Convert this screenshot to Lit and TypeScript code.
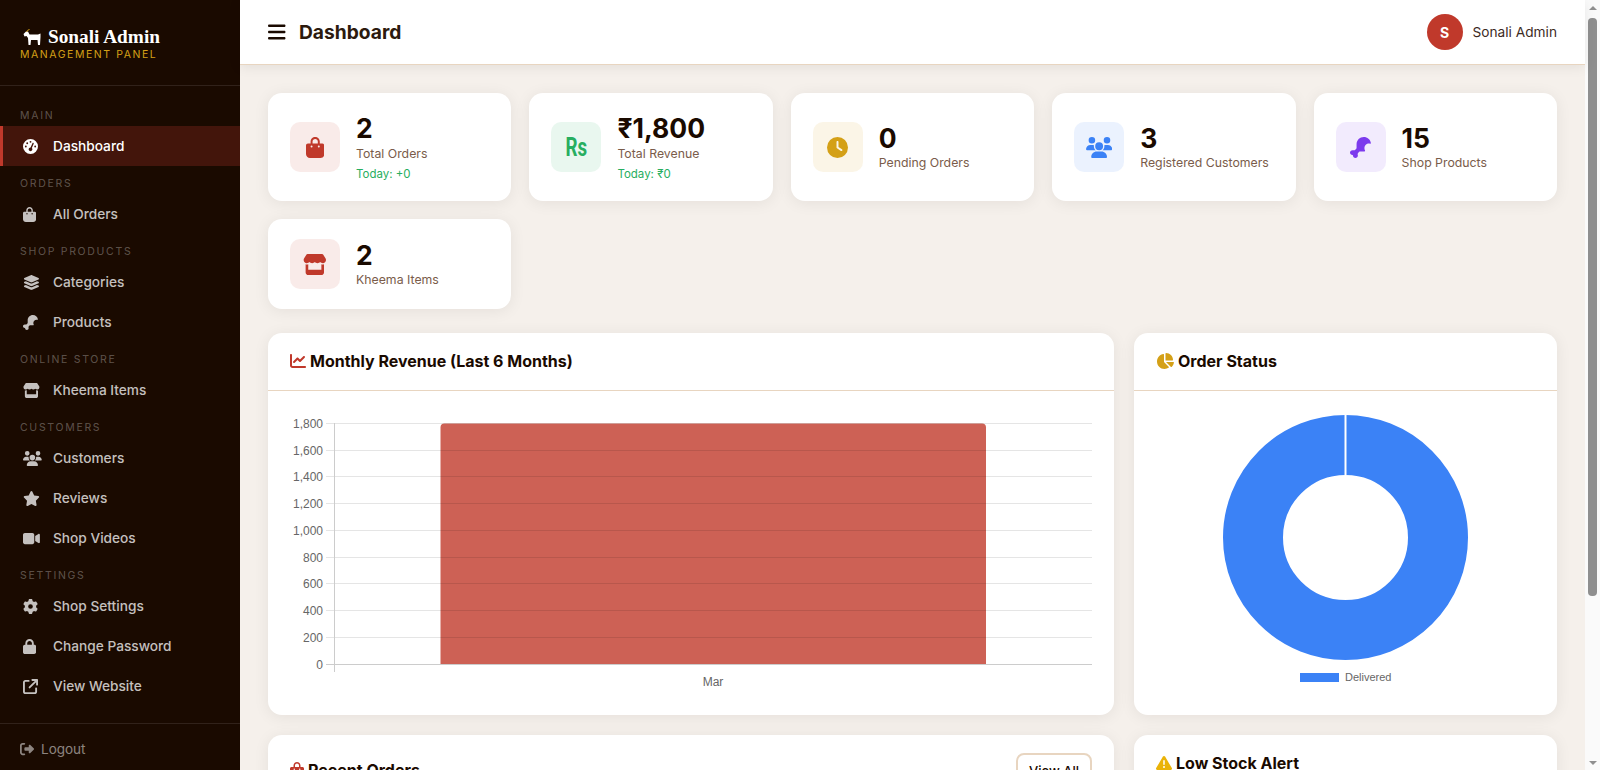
import {LitElement, html, css, svg} from 'lit';
import {customElement} from 'lit/decorators.js';

type Icon = {w: number; d: string};

const ICONS: Record<string, Icon> = {
    bag: {w: 448, d: 'M160 112c0-35.3 28.7-64 64-64s64 28.7 64 64v48H160V112zm-48 48H48c-26.5 0-48 21.5-48 48V416c0 53 43 96 96 96H352c53 0 96-43 96-96V208c0-26.5-21.5-48-48-48H336V112C336 50.1 285.9 0 224 0S112 50.1 112 112v48zm24 48a24 24 0 1 1 0 48 24 24 0 1 1 0-48zm152 24a24 24 0 1 1 48 0 24 24 0 1 1 -48 0z'},
    gauge: {w: 512, d: 'M0 256a256 256 0 1 1 512 0A256 256 0 1 1 0 256zM288 96a32 32 0 1 0 -64 0 32 32 0 1 0 64 0zM256 416c35.3 0 64-28.7 64-64c0-17.4-6.9-33.1-18.1-44.6L366 161.7c5.3-12.1-.2-26.3-12.3-31.6s-26.3 .2-31.6 12.3L257.9 288c-.6 0-1.3 0-1.9 0c-35.3 0-64 28.7-64 64s28.7 64 64 64zM176 144a32 32 0 1 0 -64 0 32 32 0 1 0 64 0zM96 288a32 32 0 1 0 0-64 32 32 0 1 0 0 64zm352-32a32 32 0 1 0 -64 0 32 32 0 1 0 64 0z'},
    layers: {w: 576, d: 'M264.5 5.2c14.9-6.9 32.1-6.9 47 0l218.6 101c8.5 3.9 13.9 12.4 13.9 21.8s-5.4 17.9-13.9 21.8l-218.6 101c-14.9 6.9-32.1 6.9-47 0L45.9 149.8C37.4 145.8 32 137.3 32 128s5.4-17.9 13.9-21.8L264.5 5.2zM476.9 209.6l53.2 24.6c8.5 3.9 13.9 12.4 13.9 21.8s-5.4 17.9-13.9 21.8l-218.6 101c-14.9 6.9-32.1 6.9-47 0L45.9 277.8C37.4 273.8 32 265.3 32 256s5.4-17.9 13.9-21.8l53.2-24.6 152 70.2c23.4 10.8 50.4 10.8 73.8 0l152-70.2zm-152 198.2l152-70.2 53.2 24.6c8.5 3.9 13.9 12.4 13.9 21.8s-5.4 17.9-13.9 21.8l-218.6 101c-14.9 6.9-32.1 6.9-47 0L45.9 405.8C37.4 401.8 32 393.3 32 384s5.4-17.9 13.9-21.8l53.2-24.6 152 70.2c23.4 10.8 50.4 10.8 73.8 0z'},
    drumstick: {w: 512, d: 'M160 265.2c0 8.5-3.4 16.6-9.4 22.6l-26.8 26.8c-12.3 12.3-32.5 11.4-49.4 7.2C69.8 320.6 65 320 60 320c-33.1 0-60 26.9-60 60s26.9 60 60 60c6.3 0 12 5.7 12 12c0 33.1 26.9 60 60 60s60-26.9 60-60c0-5-.6-9.8-1.8-14.4c-4.2-16.9-5.2-37.1 7.2-49.4l26.8-26.8c6-6 14.1-9.4 22.6-9.4H336c6.3 0 12.4-.3 18.5-1c11.9-1.2 16.4-15.5 10.8-26c-8.5-15.8-13.3-33.8-13.3-53c0-61.9 50.1-112 112-112c8 0 15.7 .8 23.2 2.4c11.7 2.5 24.1-5.9 22.1-17.6C494.5 62.5 422.5 0 336 0C238.8 0 160 78.8 160 176v89.2z'},
    store: {w: 576, d: 'M547.6 103.8L490.3 13.1C485.2 5 476.1 0 466.4 0H109.6C99.9 0 90.8 5 85.7 13.1L28.3 103.8c-29.6 46.8-3.4 111.9 51.9 119.4c4 .5 8.1 .8 12.1 .8c26.1 0 49.3-11.4 65.2-29c15.9 17.6 39.1 29 65.2 29c26.1 0 49.3-11.4 65.2-29c15.9 17.6 39.1 29 65.2 29c26.2 0 49.3-11.4 65.2-29c16 17.6 39.1 29 65.2 29c4.1 0 8.1-.3 12.1-.8c55.5-7.4 81.8-72.5 52.1-119.4zM499.7 254.9l-.1 0c-5.3 .7-10.7 1.1-16.2 1.1c-12.4 0-24.3-1.9-35.4-5.3V384H128V250.6c-11.2 3.5-23.2 5.4-35.6 5.4c-5.5 0-11-.4-16.3-1.1l-.1 0c-4.1-.6-8.1-1.3-12-2.3V384v64c0 35.3 28.7 64 64 64H448c35.3 0 64-28.7 64-64V384 252.6c-4 1-8 1.8-12.3 2.3z'},
    clock: {w: 512, d: 'M256 0a256 256 0 1 1 0 512A256 256 0 1 1 256 0zM232 120V256c0 8 4 15.5 10.7 20l96 64c11 7.4 25.9 4.4 33.3-6.7s4.4-25.9-6.7-33.3L280 243.2V120c0-13.3-10.7-24-24-24s-24 10.7-24 24z'},
    users: {w: 640, d: 'M144 0a80 80 0 1 1 0 160A80 80 0 1 1 144 0zM512 0a80 80 0 1 1 0 160A80 80 0 1 1 512 0zM0 298.7C0 239.8 47.8 192 106.7 192h42.7c15.9 0 31 3.5 44.6 9.7c-1.3 7.2-1.9 14.7-1.9 22.3c0 38.2 16.8 72.5 43.3 96c-.2 0-.4 0-.7 0H21.3C9.6 320 0 310.4 0 298.7zM405.3 320c-.2 0-.4 0-.7 0c26.6-23.5 43.3-57.8 43.3-96c0-7.6-.7-15-1.9-22.3c13.6-6.3 28.7-9.7 44.6-9.7h42.7C592.2 192 640 239.8 640 298.7c0 11.8-9.6 21.3-21.3 21.3H405.3zM224 224a96 96 0 1 1 192 0 96 96 0 1 1 -192 0zM128 485.3C128 411.7 187.7 352 261.3 352H378.7C452.3 352 512 411.7 512 485.3c0 14.7-11.9 26.7-26.7 26.7H154.7c-14.7 0-26.7-11.9-26.7-26.7z'},
    star: {w: 576, d: 'M316.9 18C311.6 7 300.4 0 288.1 0s-23.4 7-28.8 18L195 150.3 51.4 171.5c-12 1.8-22 10.2-25.7 21.7s-.7 24.2 7.9 32.7L137.8 329 113.2 474.7c-2 12 3 24.2 12.9 31.3s23 8 33.8 2.3l128.3-68.5 128.3 68.5c10.8 5.7 23.9 4.9 33.8-2.3s14.9-19.3 12.9-31.3L438.5 329 542.7 225.9c8.6-8.5 11.7-21.2 7.9-32.7s-13.7-19.9-25.7-21.7L381.2 150.3 316.9 18z'},
    video: {w: 576, d: 'M0 128C0 92.7 28.7 64 64 64H320c35.3 0 64 28.7 64 64V384c0 35.3-28.7 64-64 64H64c-35.3 0-64-28.7-64-64V128zM559.1 99.8c10.4 5.6 16.9 16.4 16.9 28.2V384c0 11.8-6.5 22.6-16.9 28.2s-23 5-32.9-1.6l-96-64L416 337.1V320 192 174.9l14.2-9.5 96-64c9.8-6.5 22.4-7.2 32.9-1.6z'},
    gear: {w: 512, d: 'M495.9 166.6c3.2 8.7 .5 18.4-6.4 24.6l-43.3 39.4c1.1 8.3 1.7 16.8 1.7 25.4s-.6 17.1-1.7 25.4l43.3 39.4c6.9 6.2 9.6 15.9 6.4 24.6c-4.4 11.9-9.7 23.3-15.8 34.3l-4.7 8.1c-6.6 11-14 21.4-22.1 31.2c-5.9 7.2-15.7 9.6-24.5 6.8l-55.7-17.7c-13.4 10.3-28.2 18.9-44 25.4l-12.5 57.1c-2 9.1-9 16.3-18.2 17.8c-13.8 2.3-28 3.5-42.5 3.5s-28.7-1.2-42.5-3.5c-9.2-1.5-16.2-8.7-18.2-17.8l-12.5-57.1c-15.8-6.5-30.6-15.1-44-25.4L83.1 425.9c-8.8 2.8-18.6 .3-24.5-6.8c-8.1-9.8-15.5-20.2-22.1-31.2l-4.7-8.1c-6.1-11-11.4-22.4-15.8-34.3c-3.2-8.7-.5-18.4 6.4-24.6l43.3-39.4C64.6 273.1 64 264.6 64 256s.6-17.1 1.7-25.4L22.4 191.2c-6.9-6.2-9.6-15.9-6.4-24.6c4.4-11.9 9.7-23.3 15.8-34.3l4.7-8.1c6.6-11 14-21.4 22.1-31.2c5.9-7.2 15.7-9.6 24.5-6.8l55.7 17.7c13.4-10.3 28.2-18.9 44-25.4l12.5-57.1c2-9.1 9-16.3 18.2-17.8C227.3 1.2 241.5 0 256 0s28.7 1.2 42.5 3.5c9.2 1.5 16.2 8.7 18.2 17.8l12.5 57.1c15.8 6.5 30.6 15.1 44 25.4l55.7-17.7c8.8-2.8 18.6-.3 24.5 6.8c8.1 9.8 15.5 20.2 22.1 31.2l4.7 8.1c6.1 11 11.4 22.4 15.8 34.3zM256 336a80 80 0 1 0 0-160 80 80 0 1 0 0 160z'},
    lock: {w: 448, d: 'M144 144v48H304V144c0-44.2-35.8-80-80-80s-80 35.8-80 80zM80 192V144C80 64.5 144.5 0 224 0s144 64.5 144 144v48h16c35.3 0 64 28.7 64 64V448c0 35.3-28.7 64-64 64H64c-35.3 0-64-28.7-64-64V256c0-35.3 28.7-64 64-64H80z'},
    external: {w: 512, d: 'M320 0c-17.7 0-32 14.3-32 32s14.3 32 32 32h82.7L201.4 265.4c-12.5 12.5-12.5 32.8 0 45.3s32.8 12.5 45.3 0L448 109.3V192c0 17.7 14.3 32 32 32s32-14.3 32-32V32c0-17.7-14.3-32-32-32H320zM80 32C35.8 32 0 67.8 0 112V432c0 44.2 35.8 80 80 80H400c44.2 0 80-35.8 80-80V320c0-17.7-14.3-32-32-32s-32 14.3-32 32V432c0 8.8-7.2 16-16 16H80c-8.8 0-16-7.2-16-16V112c0-8.8 7.2-16 16-16H192c17.7 0 32-14.3 32-32s-14.3-32-32-32H80z'},
    logout: {w: 512, d: 'M377.9 105.9L500.7 228.7c7.2 7.2 11.3 17.1 11.3 27.3s-4.1 20.1-11.3 27.3L377.9 406.1c-6.4 6.4-15 9.9-24 9.9c-18.7 0-33.9-15.2-33.9-33.9l0-62.1-128 0c-17.7 0-32-14.3-32-32l0-64c0-17.7 14.3-32 32-32l128 0 0-62.1c0-18.7 15.2-33.9 33.9-33.9c9 0 17.6 3.6 24 9.9zM160 96L96 96c-17.7 0-32 14.3-32 32l0 256c0 17.7 14.3 32 32 32l64 0c17.7 0 32 14.3 32 32s-14.3 32-32 32l-64 0c-53 0-96-43-96-96L0 128C0 75 43 32 96 32l64 0c17.7 0 32 14.3 32 32s-14.3 32-32 32z'},
    chart: {w: 512, d: 'M64 64c0-17.7-14.3-32-32-32S0 46.3 0 64V400c0 44.2 35.8 80 80 80H480c17.7 0 32-14.3 32-32s-14.3-32-32-32H80c-8.8 0-16-7.2-16-16V64zm406.6 86.6c12.5-12.5 12.5-32.8 0-45.3s-32.8-12.5-45.3 0L320 210.7l-57.4-57.4c-12.5-12.5-32.8-12.5-45.3 0l-112 112c-12.5 12.5-12.5 32.8 0 45.3s32.8 12.5 45.3 0L240 221.3l57.4 57.4c12.5 12.5 32.8 12.5 45.3 0l128-128z'},
    pie: {w: 576, d: 'M304 240V16.6c0-9 7-16.6 16-16.6C443.7 0 544 100.3 544 224c0 9-7.6 16-16.6 16H304zM32 272C32 150.7 122.1 50.3 239 34.3c9.2-1.3 17 6.1 17 15.4V288L412.5 444.5c6.7 6.7 6.2 17.7-1.5 23.1C371.8 495.6 323.8 512 272 512C139.5 512 32 404.6 32 272zm526.4 16c9.3 0 16.6 7.8 15.4 17c-7.7 55.9-34.6 105.6-73.9 142.3c-6 5.6-15.4 5.2-21.2-.7L320 288H558.4z'},
    warn: {w: 512, d: 'M256 32c14.2 0 27.3 7.5 34.5 19.8l216 368c7.3 12.4 7.3 27.7 .2 40.1S486.3 480 472 480H40c-14.3 0-27.6-7.7-34.7-20.1s-7-27.8 .2-40.1l216-368C228.7 39.5 241.8 32 256 32zm0 128c-13.3 0-24 10.7-24 24V296c0 13.3 10.7 24 24 24s24-10.7 24-24V184c0-13.3-10.7-24-24-24zm32 224a32 32 0 1 0 -64 0 32 32 0 1 0 64 0z'},
    bars: {w: 448, d: 'M0 96C0 78.3 14.3 64 32 64H416c17.7 0 32 14.3 32 32s-14.3 32-32 32H32C14.3 128 0 113.7 0 96zM0 256c0-17.7 14.3-32 32-32H416c17.7 0 32 14.3 32 32s-14.3 32-32 32H32c-17.7 0-32-14.3-32-32zM448 416c0 17.7-14.3 32-32 32H32c-17.7 0-32-14.3-32-32s14.3-32 32-32H416c17.7 0 32 14.3 32 32z'},
};

const icon = (name: string, size: number) => {
    const i = ICONS[name];
    return html`<svg class="fa" viewBox="0 0 ${i.w} 512" height=${size} width=${(size * i.w) / 512} fill="currentColor"><path d=${i.d}></path></svg>`;
};

const NAV: {label: string; items: {name: string; icon: string; active?: boolean}[]}[] = [
    {label: 'Main', items: [{name: 'Dashboard', icon: 'gauge', active: true}]},
    {label: 'Orders', items: [{name: 'All Orders', icon: 'bag'}]},
    {label: 'Shop Products', items: [{name: 'Categories', icon: 'layers'}, {name: 'Products', icon: 'drumstick'}]},
    {label: 'Online Store', items: [{name: 'Kheema Items', icon: 'store'}]},
    {label: 'Customers', items: [{name: 'Customers', icon: 'users'}, {name: 'Reviews', icon: 'star'}, {name: 'Shop Videos', icon: 'video'}]},
    {label: 'Settings', items: [{name: 'Shop Settings', icon: 'gear'}, {name: 'Change Password', icon: 'lock'}, {name: 'View Website', icon: 'external'}]},
];

const STATS = [
    {tone: 'red', icon: 'bag', value: '2', label: 'Total Orders', sub: 'Today: +0'},
    {tone: 'green', icon: '', value: '₹1,800', label: 'Total Revenue', sub: 'Today: ₹0'},
    {tone: 'gold', icon: 'clock', value: '0', label: 'Pending Orders'},
    {tone: 'blue', icon: 'users', value: '3', label: 'Registered Customers'},
    {tone: 'purple', icon: 'drumstick', value: '15', label: 'Shop Products'},
    {tone: 'red', icon: 'store', value: '2', label: 'Kheema Items'},
];

const TICKS = [1800, 1600, 1400, 1200, 1000, 800, 600, 400, 200, 0];

@customElement('app-root')
export class AppRoot extends LitElement {
    static override styles = css`
        :host {
            --ink: #1a0a00;
            --line: #e8d5c0;
            --red: #c0392b;
            --gold: #d4a017;
            --muted: #7a5c4a;
            display: flex;
            width: 100%;
            height: 770px;
            overflow: hidden;
            background: #f5f0eb;
            color: var(--ink);
            font-family: 'Inter', 'Noto Sans', sans-serif;
        }

        * {
            box-sizing: border-box;
        }

        .fa {
            display: block;
            flex: none;
        }

        .sidebar {
            width: 240px;
            flex: none;
            height: 770px;
            background: var(--ink);
            display: flex;
            flex-direction: column;
        }

        .brand {
            height: 86px;
            padding: 26px 20px 0;
            border-bottom: 1px solid rgba(255, 255, 255, 0.1);
        }

        .brand-title {
            display: flex;
            align-items: center;
            gap: 7px;
            padding-left: 3px;
            height: 22px;
            color: #fff;
            font: 700 19.3px 'Liberation Serif', serif;
        }

        .brand-sub {
            font-size: 10.5px;
            line-height: 14px;
            letter-spacing: 1.55px;
            color: var(--gold);
            text-transform: uppercase;
        }

        .nav {
            flex: 1;
            padding-top: 12px;
        }

        .nav-label {
            height: 28px;
            line-height: 36px;
            padding-left: 20px;
            font-size: 10.5px;
            letter-spacing: 1.7px;
            text-transform: uppercase;
            color: rgba(255, 255, 255, 0.3);
        }

        .nav-item {
            height: 40px;
            display: flex;
            align-items: center;
            gap: 13px;
            border-left: 3px solid transparent;
            padding-left: 20px;
            font-size: 13.7px;
            font-weight: 500;
            color: rgba(255, 255, 255, 0.75);
        }

        .nav-item.active {
            background: rgba(192, 57, 43, 0.25);
            border-left-color: var(--red);
            color: #fff;
        }

        .nav-icon {
            width: 17px;
            display: flex;
        }

        .logout {
            height: 47px;
            padding: 3px 0 0 20px;
            border-top: 1px solid rgba(255, 255, 255, 0.1);
            display: flex;
            align-items: center;
            gap: 7px;
            font-size: 13.5px;
            color: rgba(255, 255, 255, 0.5);
        }

        .main {
            flex: 1;
            min-width: 0;
        }

        .topbar {
            height: 65px;
            background: #fff;
            border-bottom: 1px solid var(--line);
            box-shadow: 0 2px 12px rgba(0, 0, 0, 0.08);
            display: flex;
            align-items: center;
            padding: 0 28px;
            position: relative;
        }

        .menu {
            margin-right: 13.5px;
            color: var(--ink);
        }

        .page-title {
            font-size: 19.2px;
            font-weight: 700;
            flex: 1;
            color: #2c1a0e;
        }

        .avatar {
            width: 36px;
            height: 36px;
            border-radius: 50%;
            background: var(--red);
            color: #fff;
            font-size: 14px;
            font-weight: 700;
            display: flex;
            align-items: center;
            justify-content: center;
            margin-right: 10px;
        }

        .user-name {
            font-size: 13.7px;
            color: #3d2b1f;
        }

        .content {
            padding: 28px;
        }

        .stats {
            display: grid;
            grid-template-columns: repeat(5, 1fr);
            gap: 18px;
            margin-bottom: 24px;
        }

        .card {
            background: #fff;
            border-radius: 14px;
            box-shadow: 0 2px 16px rgba(26, 10, 0, 0.07);
        }

        .stat {
            display: flex;
            align-items: center;
            gap: 16px;
            padding: 20px 22px;
        }

        .stat-icon {
            width: 50px;
            height: 50px;
            flex: none;
            border-radius: 10px;
            display: flex;
            align-items: center;
            justify-content: center;
        }

        .red {
            background: rgba(192, 57, 43, 0.1);
            color: var(--red);
        }
        .green {
            background: rgba(39, 174, 96, 0.1);
            color: #27ae60;
        }
        .gold {
            background: rgba(212, 160, 23, 0.1);
            color: var(--gold);
        }
        .blue {
            background: rgba(59, 130, 246, 0.1);
            color: #3b82f6;
        }
        .purple {
            background: rgba(124, 58, 237, 0.1);
            color: #7c3aed;
        }

        .rs {
            display: inline-block;
            font: 700 25px 'Roboto', sans-serif;
            transform: scaleX(0.75);
        }

        .stat-value {
            font-size: 26.5px;
            font-weight: 700;
            line-height: 30px;
        }

        .stat-label {
            margin-top: 2px;
            font-size: 12.3px;
            line-height: 18px;
            color: var(--muted);
        }

        .plain .stat-value {
            margin-top: 1px;
        }

        .plain .stat-label {
            margin-top: 1px;
        }

        .stat-sub {
            margin: 3px 0 -2px;
            font-size: 11.5px;
            line-height: 17px;
            color: #27ae60;
        }

        .row {
            display: grid;
            grid-template-columns: 2fr 1fr;
            gap: 20px;
            margin-bottom: 20px;
        }

        .card-head {
            display: flex;
            align-items: center;
            justify-content: space-between;
            padding: 0 22px;
            height: 58px;
            border-bottom: 1px solid var(--line);
        }

        .card-head.tall {
            height: 72px;
        }

        .card-title {
            display: flex;
            align-items: center;
            gap: 4px;
            padding-bottom: 1px;
            font-size: 16px;
            font-weight: 700;
        }

        .tone-red {
            color: var(--red);
        }
        .tone-gold {
            color: var(--gold);
        }
        .tone-warn {
            color: #eab308;
        }

        .btn {
            height: 36px;
            padding: 0 11px;
            display: flex;
            align-items: center;
            border: 2px solid var(--line);
            border-radius: 8px;
            font-size: 13px;
            font-weight: 500;
            color: var(--ink);
        }

        .chart {
            display: block;
            width: 100%;
            height: 324px;
        }

        .chart text {
            font: 12px 'Liberation Sans', Arial, sans-serif;
            fill: #666;
        }

        .chart text.legend {
            font-size: 11px;
        }

        .scrollbar {
            width: 15px;
            flex: none;
            background: #fafafa;
            display: flex;
            flex-direction: column;
            align-items: center;
        }

        .arrow-up,
        .arrow-down {
            width: 0;
            height: 0;
            border-left: 4.5px solid transparent;
            border-right: 4.5px solid transparent;
        }

        .arrow-up {
            margin: 6px 0 8px;
            border-bottom: 4px solid #8f8f8f;
        }

        .arrow-down {
            margin: auto 0 5px;
            border-top: 4px solid #8f8f8f;
        }

        .thumb {
            width: 9px;
            height: 578px;
            border-radius: 4px;
            background: #8f8f8f;
        }
    `;

    private _bars() {
        // plot area measured from the card's left edge and the bottom of the header
        const top = 32;
        const bottom = 272.7;
        const step = (bottom - top) / 9;
        return svg`
            <path d="M172.5 273 V36.5 Q172.5 32.5 176.5 32.5 H714 Q718 32.5 718 36.5 V273 Z" fill="#c0392b" fill-opacity="0.8"></path>
            ${TICKS.map((t, i) => {
                const y = Math.round(top + step * i) + 0.5;
                return svg`
                    <line x1="58" x2="824" y1=${y} y2=${y} stroke=${t === 0 ? '#ccc' : 'rgba(0,0,0,0.1)'}></line>
                    <text x="55" y=${y + 4} text-anchor="end">${t.toLocaleString('en-US')}</text>`;
            })}
            <line x1="66.5" x2="66.5" y1="32" y2="281" stroke="#ccc"></line>
            <text x="445" y="295" text-anchor="middle">Mar</text>`;
    }

    private _donut() {
        // cut-out 50%; the white gap at 12 o'clock is the arc's border
        return svg`
            <circle cx="211.5" cy="146.5" r="92.5" fill="none" stroke="#3b82f6" stroke-width="60"></circle>
            <line x1="211.5" x2="211.5" y1="24" y2="84" stroke="#fff" stroke-width="2"></line>
            <rect x="166" y="282" width="39" height="9" fill="#3b82f6"></rect>
            <text class="legend" x="211" y="290">Delivered</text>`;
    }

    override render() {
        return html`
            <aside class="sidebar">
                <div class="brand">
                    <div class="brand-title">
                        <svg viewBox="0 0 18 16" width="18" height="16" fill="#fff">
                            <path d="M0.5 5 L3 2.5 L5 2.5 L6.5 5.5 L15 5.5 L17.5 4.5 L17.5 8 L17 16 L15 16 L14.5 11 L8 11 L7.5 16 L5.5 16 L5 9 L3.5 7 L1.5 7.5 Z"></path>
                            <path d="M3.5 3 Q4 1 6.5 0.5" fill="none" stroke="#d4a017" stroke-width="1"></path>
                        </svg>
                        <span>Sonali Admin</span>
                    </div>
                    <div class="brand-sub">Management Panel</div>
                </div>
                <nav class="nav">
                    ${NAV.map(
                        (s) => html`
                            <div class="nav-label">${s.label}</div>
                            ${s.items.map(
                                (it) => html`
                                    <div class="nav-item ${it.active ? 'active' : ''}">
                                        <span class="nav-icon">${icon(it.icon, 15)}</span>
                                        <span>${it.name}</span>
                                    </div>
                                `
                            )}
                        `
                    )}
                </nav>
                <div class="logout">${icon('logout', 14)}<span>Logout</span></div>
            </aside>

            <div class="main">
                <header class="topbar">
                    <span class="menu">${icon('bars', 20)}</span>
                    <div class="page-title">Dashboard</div>
                    <div class="avatar">S</div>
                    <div class="user-name">Sonali Admin</div>
                </header>
                <div class="content">
                    <section class="stats">
                        ${STATS.map(
                            (s) => html`
                                <div class="card stat">
                                    <div class="stat-icon ${s.tone}">
                                        ${s.icon ? icon(s.icon, 21) : html`<span class="rs">Rs</span>`}
                                    </div>
                                    <div class=${s.sub ? '' : 'plain'}>
                                        <div class="stat-value">${s.value}</div>
                                        <div class="stat-label">${s.label}</div>
                                        ${s.sub ? html`<div class="stat-sub">${s.sub}</div>` : ''}
                                    </div>
                                </div>
                            `
                        )}
                    </section>
                    <section class="row">
                        <div class="card">
                            <div class="card-head">
                                <div class="card-title"><span class="tone-red">${icon('chart', 16)}</span>Monthly Revenue (Last 6 Months)</div>
                            </div>
                            <svg class="chart">${this._bars()}</svg>
                        </div>
                        <div class="card">
                            <div class="card-head">
                                <div class="card-title"><span class="tone-gold">${icon('pie', 16)}</span>Order Status</div>
                            </div>
                            <svg class="chart">${this._donut()}</svg>
                        </div>
                    </section>
                    <section class="row">
                        <div class="card">
                            <div class="card-head tall">
                                <div class="card-title"><span class="tone-red">${icon('bag', 16)}</span>Recent Orders</div>
                                <div class="btn">View All</div>
                            </div>
                        </div>
                        <div class="card">
                            <div class="card-head">
                                <div class="card-title"><span class="tone-warn">${icon('warn', 16)}</span>Low Stock Alert</div>
                            </div>
                        </div>
                    </section>
                </div>
            </div>
            <div class="scrollbar">
                <div class="arrow-up"></div>
                <div class="thumb"></div>
                <div class="arrow-down"></div>
            </div>
        `;
    }
}

declare global {
    interface HTMLElementTagNameMap {
        'app-root': AppRoot;
    }
}
